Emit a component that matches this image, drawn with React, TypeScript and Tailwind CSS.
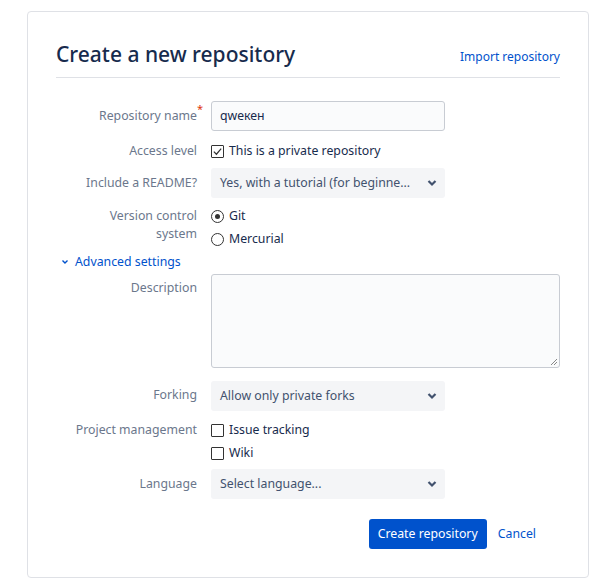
import { ChevronDown } from "lucide-react";
import type { ReactNode } from "react";

const font = { fontFamily: '"Noto Sans", "Open Sans", sans-serif' };

function Row({
  label,
  required,
  children,
  className = "",
  labelClass = "pt-[6px]",
}: {
  label: ReactNode;
  required?: boolean;
  children: ReactNode;
  className?: string;
  labelClass?: string;
}) {
  return (
    <div className={`flex gap-[14px] ${className}`}>
      <div className={`relative w-[141px] shrink-0 text-right text-[12.3px] leading-[18px] text-[#6b778c] ${labelClass}`}>
        {label}
        {required && (
          <span className="absolute -right-[6px] top-[2px] text-[11px] leading-none text-[#de350b]">*</span>
        )}
      </div>
      <div className="min-w-0 flex-1">{children}</div>
    </div>
  );
}

function Select({ value }: { value: string }) {
  return (
    <div className="flex h-[30px] w-[234px] items-center justify-between rounded-[3px] bg-[#f4f5f7] pl-[9px] pr-[7px] text-[12.3px] text-[#42526e]">
      <span className="whitespace-nowrap">{value}</span>
      <svg viewBox="0 0 10 8" className="mr-[1px] h-[8px] w-[10px] shrink-0">
        <path d="M1.5 2 5 5.5 8.5 2" fill="none" stroke="#42526e" strokeWidth="2.2" />
      </svg>
    </div>
  );
}

function Check({ label, checked }: { label: string; checked?: boolean }) {
  return (
    <label className="flex h-[20px] items-center gap-[5px] text-[12.3px] text-[#172b4d]">
      <span className="flex h-[13px] w-[13px] items-center justify-center rounded-[1px] border border-[#333] bg-white">
        {checked && (
          <svg viewBox="0 0 12 12" className="h-[11px] w-[11px]">
            <path d="M2 6.2 4.8 9 10 2.8" fill="none" stroke="#333" strokeWidth="1.3" />
          </svg>
        )}
      </span>
      {label}
    </label>
  );
}

function Radio({ label, checked }: { label: string; checked?: boolean }) {
  return (
    <label className="flex h-[20px] items-center gap-[5px] text-[12.3px] text-[#172b4d]">
      <span className="flex h-[13px] w-[13px] items-center justify-center rounded-full border border-[#333] bg-white">
        {checked && <span className="h-[5px] w-[5px] rounded-full bg-[#333]" />}
      </span>
      {label}
    </label>
  );
}

export default function App() {
  return (
    <div className="min-h-[580px] bg-white pl-[27px] pt-[11px]" style={font}>
      <div className="h-[567px] w-[562px] rounded-[4px] border border-[#dfe1e6] px-[28px] pt-[26px]">
        <div className="flex items-end justify-between border-b border-[#dfe1e6] pb-[7px]">
          <h1 className="text-[21px] font-medium leading-[32px] text-[#172b4d]">Create a new repository</h1>
          <a className="mb-[4px] text-[12px] text-[#0052cc]">Import repository</a>
        </div>

        <div className="mt-[23px] flex flex-col">
          <Row label="Repository name" required labelClass="pt-[6px]">
            <div className="flex h-[30px] w-[234px] items-center rounded-[3px] border border-[#c8ccd3] bg-[#fafbfc] px-[8px] text-[12.3px] text-[#172b4d]">
              qwекен
            </div>
          </Row>
          <Row label="Access level" className="mt-[10px]" labelClass="pt-[1px]">
            <Check label="This is a private repository" checked />
          </Row>
          <Row label="Include a README?" className="mt-[7px]">
            <Select value="Yes, with a tutorial (for beginne..." />
          </Row>
          <Row label={<>Version control<br />system</>} className="mt-[8px]" labelClass="pt-[1px]">
            <div className="flex flex-col gap-[3px]">
              <Radio label="Git" checked />
              <Radio label="Mercurial" />
            </div>
          </Row>
          <div className="mt-[3px] flex h-[20px] items-center gap-[6px] pl-[5px] text-[12.3px] text-[#0052cc]">
            <svg viewBox="0 0 8 6" className="h-[6px] w-[8px]">
              <path d="M1.5 1.5 4 4 6.5 1.5" fill="none" stroke="#0052cc" strokeWidth="1.4" />
            </svg>
            Advanced settings
          </div>
          <Row label="Description" className="mt-[2px]" labelClass="pt-[5px]">
            <div className="relative h-[94px] w-[349px] rounded-[3px] border border-[#c8ccd3] bg-[#fafbfc]">
              <svg viewBox="0 0 8 8" className="absolute bottom-[1px] right-[1px] h-[8px] w-[8px]">
                <path d="M7 1 1 7M7 4 4 7" stroke="#888" strokeWidth="1" />
              </svg>
            </div>
          </Row>
          <Row label="Forking" className="mt-[13px]" labelClass="pt-[5px]">
            <Select value="Allow only private forks" />
          </Row>
          <Row label="Project management" className="mt-[9px]" labelClass="pt-[1px]">
            <div className="flex flex-col gap-[3px]">
              <Check label="Issue tracking" />
              <Check label="Wiki" />
            </div>
          </Row>
          <Row label="Language" className="mt-[6px]" labelClass="pt-[6px]">
            <Select value="Select language..." />
          </Row>
          <div className="mt-[20px] flex items-center justify-end gap-[11px] pr-[24px]">
            <button className="h-[30px] rounded-[3px] bg-[#0052cc] px-[9px] text-[12.3px] text-white">Create repository</button>
            <a className="text-[12.3px] text-[#0052cc]">Cancel</a>
          </div>
        </div>
      </div>
    </div>
  );
}
